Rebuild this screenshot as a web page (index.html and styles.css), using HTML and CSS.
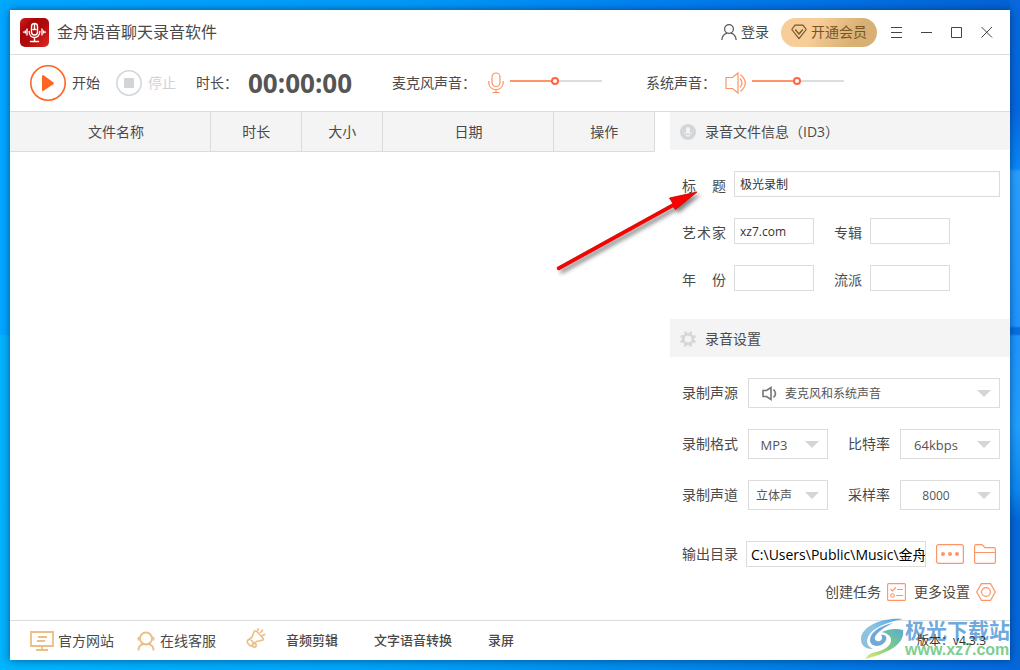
FILE: index.html
```html
<!DOCTYPE html>
<html lang="zh-CN">
<head>
<meta charset="utf-8">
<title>金舟语音聊天录音软件</title>
<link rel="stylesheet" href="styles.css">
</head>
<body>
<div class="window">
  <header class="titlebar">
    <svg class="logo" width="29" height="29" viewBox="0 0 29 29">
      <defs><linearGradient id="red" x1="0" y1="0" x2="1" y2="1"><stop offset="0" stop-color="#d81c1c"/><stop offset=".3" stop-color="#a60608"/><stop offset=".55" stop-color="#b00a0c"/><stop offset="1" stop-color="#e02a24"/></linearGradient></defs>
      <rect width="29" height="29" rx="5" fill="url(#red)"/>
      <g fill="none" stroke="#fff" stroke-width="1.4" stroke-linecap="round"><rect x="11.5" y="5.5" width="6" height="11.5" rx="3"/><path d="M14.5 6v5M13 11.5h3M9.2 13.5c0 8 10.6 8 10.6 0M14.5 19.5v4M10.5 23.5h8M7 11v6M5.3 13v2M3.8 14v.3M22 11v6M23.7 13v2M25.2 14v.3"/></g>
    </svg>
    <h1 class="app-name">金舟语音聊天录音软件</h1>
    <button class="plain login" type="button">
      <svg width="16" height="18" viewBox="0 0 16 18" fill="none" stroke="#555" stroke-width="1.2"><circle cx="8" cy="6" r="4.4"/><path d="M.8 17c.4-4 3-6.2 5.4-6.8M15.2 17c-.4-4-3-6.2-5.4-6.8"/></svg>
      登录
    </button>
    <button class="vip" type="button">
      <svg width="16" height="16" viewBox="0 0 16 16" fill="none" stroke="#7a5523" stroke-width="1.2" stroke-linejoin="round"><path d="M4 1.2h8l3.2 4.3L8 14.6.8 5.5zM4.2 5.5L8 10l3.8-4.5"/></svg>
      开通会员
    </button>
    <div class="win-buttons">
      <button class="plain" type="button" aria-label="菜单"><svg width="12" height="12" viewBox="0 0 12 12" stroke="#444"><path d="M0 1.5h11M0 6.5h11M0 11.5h11"/></svg></button>
      <button class="plain" type="button" aria-label="最小化"><svg width="12" height="12" viewBox="0 0 12 12" stroke="#444"><path d="M0 6.5h11"/></svg></button>
      <button class="plain" type="button" aria-label="最大化"><svg width="12" height="12" viewBox="0 0 12 12" stroke="#444" fill="none"><path d="M.5 1.5h10v10H.5z"/></svg></button>
      <button class="plain" type="button" aria-label="关闭"><svg width="12" height="12" viewBox="0 0 12 12" stroke="#444"><path d="M.5 1L11 11.5M11 1L.5 11.5"/></svg></button>
    </div>
  </header>

  <div class="toolbar">
    <button class="plain start" type="button">
      <svg width="36" height="36" viewBox="0 0 36 36"><circle cx="18" cy="18" r="17.2" fill="none" stroke="#ff6422" stroke-width="1.6"/><path d="M12 11.500v13.500q0 1.800 1.600.8l9.600-6.500q1.200-1 0-2L13.600 10.200Q12 9.300 12 11.500z" fill="#ff6422"/></svg>
      开始
    </button>
    <button class="plain stop" type="button" disabled>
      <svg width="26" height="26" viewBox="0 0 26 26"><circle cx="13" cy="13" r="12.2" fill="none" stroke="#d2d5d8" stroke-width="1.5"/><path d="M8 8h10v10H8z" fill="#d2d5d8"/></svg>
      停止
    </button>
    <span class="time-label">时长：</span>
    <output class="clock">00:00:00</output>
    <div class="volume mic">
      <label for="mic">麦克风声音：</label>
      <svg width="16" height="22" viewBox="0 0 16 22" fill="none" stroke="#ff9466" stroke-width="1.2"><rect x="4" y="1" width="8" height="13.5" rx="4"/><path d="M.8 9v2.500c1 8 13.400 8 14.400 0V9M8 17.500v3M4.500 20.500h7"/></svg>
      <input id="mic" type="range" min="0" max="100" value="49">
    </div>
    <div class="volume system">
      <label for="sys">系统声音：</label>
      <svg width="22" height="22" viewBox="0 0 22 22" fill="none" stroke="#ff9466" stroke-width="1.2"><path d="M1 5.500h6.500L13 1v20l-5.500-4.500H1zM15 6.500q4 4.500 0 9M15.500 2.500q9.500 8.500 0 17"/></svg>
      <input id="sys" type="range" min="0" max="100" value="49">
    </div>
  </div>

  <main class="content">
    <section class="files">
      <table>
        <colgroup><col class="c-name"><col class="c-length"><col class="c-size"><col class="c-date"><col class="c-action"></colgroup>
        <thead><tr><th class="name">文件名称</th><th>时长</th><th>大小</th><th>日期</th><th>操作</th></tr></thead>
      </table>
    </section>

    <aside class="panel">
      <h2 class="section-head">
        <svg width="16" height="16" viewBox="0 0 16 16"><circle cx="8" cy="8" r="8" fill="#d3d6d9"/><rect x="6" y="3" width="4" height="7" rx="2" fill="#f4f4f4"/><path d="M4.500 8c0 5 7 5 7 0M8 11.500V13" fill="none" stroke="#f4f4f4"/></svg>
        录音文件信息（ID3）
      </h2>
      <div class="rows info">
        <div class="row"><label class="spread" for="title">标 题</label><input class="field wide" id="title" type="text" value="极光录制"></div>
        <div class="row"><label class="spread" for="artist">艺术家</label><input class="field" id="artist" type="text" value="xz7.com"><label class="second" for="album">专辑</label><input class="field" id="album" type="text"></div>
        <div class="row"><label class="spread" for="year">年 份</label><input class="field" id="year" type="text"><label class="second" for="genre">流派</label><input class="field" id="genre" type="text"></div>
      </div>

      <h2 class="section-head">
        <svg width="16" height="16" viewBox="0 0 16 16"><g fill="none" stroke="#d3d6d9"><circle cx="8" cy="8" r="4.8" stroke-width="2.6"/><circle cx="8" cy="8" r="6.9" stroke-width="2.2" stroke-dasharray="2.7 2.719" stroke-dashoffset="-1.3"/></g></svg>
        录音设置
      </h2>
      <div class="rows settings">
        <div class="row"><label for="source">录制声源</label>
          <div class="pick source">
            <svg class="pick-icon" width="15" height="15" viewBox="0 0 15 15" fill="none" stroke="#777" stroke-width="1.6"><path d="M1 4.500h3.500L9 1.500v12l-4.500-3H1zM11.500 3.500q4 4 0 8"/></svg>
            <select id="source"><option>麦克风和系统声音</option></select>
          </div>
        </div>
        <div class="row"><label for="format">录制格式</label><div class="pick small"><select class="latin" id="format"><option>MP3</option></select></div><label class="second" for="bitrate">比特率</label><div class="pick medium"><select class="latin" id="bitrate"><option>64kbps</option></select></div></div>
        <div class="row"><label for="channel">录制声道</label><div class="pick small"><select id="channel"><option>立体声</option></select></div><label class="second" for="rate">采样率</label><div class="pick medium"><select id="rate"><option>8000</option></select></div></div>
      </div>

      <div class="output">
        <label for="path">输出目录</label>
        <input class="field path" id="path" type="text" value="C:\Users\Public\Music\金舟语音聊天录音软件">
        <button class="plain" type="button" aria-label="浏览"><svg width="28" height="20" viewBox="0 0 28 20"><rect x=".6" y=".6" width="26.8" height="18.8" rx="2" fill="none" stroke="#ff9466" stroke-width="1.2"/><g fill="#ff9466"><circle cx="7" cy="10" r="2"/><circle cx="14" cy="10" r="2"/><circle cx="21" cy="10" r="2"/></g></svg></button>
        <button class="plain" type="button" aria-label="打开目录"><svg width="22" height="20" viewBox="0 0 22 20" fill="none" stroke="#ff9466" stroke-width="1.2"><path d="M.6 18V2Q.6.600 2 .600h6l3 3h9q1.400 0 1.400 1.400v13q0 1.400-1.400 1.400H2Q.6 19.400.6 18zM.6 8.500h20.800"/></svg></button>
      </div>
      <div class="more">
        <button class="plain" type="button">创建任务
          <svg width="19" height="18" viewBox="0 0 19 18" fill="none" stroke="#ff9466" stroke-width="1.1"><rect x=".6" y=".6" width="17.8" height="16.8" rx="1"/><path d="M3.500 6l2 2L9 4.500M10 6.500h6M9 12.500h7"/><circle cx="5.5" cy="12.5" r="1.8"/></svg></button>
        <button class="plain" type="button">更多设置
          <svg width="20" height="18" viewBox="0 0 20 18" fill="none" stroke="#ff9466" stroke-width="1.2"><path d="M5.500.600h9L19.300 9l-4.800 8.400h-9L.7 9z"/><circle cx="10" cy="9" r="4.4"/></svg></button>
      </div>
    </aside>
  </main>

  <footer class="footer">
    <a class="site" href="#">
      <svg width="24" height="20" viewBox="0 0 24 20" fill="none" stroke="#ecbd84" stroke-width="1.8"><path d="M1 1h22v14H1zM8 6h9M7 10h8M12 15v4M6 19h12"/></svg>
      官方网站
    </a>
    <a class="service" href="#">
      <svg width="20" height="20" viewBox="0 0 20 20" fill="none" stroke="#ecbd84" stroke-width="1.8"><circle cx="10" cy="7.5" r="6"/><path d="M2.500 19.500c0-4 2.500-6 5-6.500M17.500 19.500c0-4-2.500-6-5-6.500M2.500 6v3.500M17.500 6v3.500"/></svg>
      在线客服
    </a>
    <svg class="horn" width="20" height="20" viewBox="0 0 20 20" fill="none" stroke="#ecbd84" stroke-width="1.6" stroke-linejoin="round" stroke-linecap="round"><path d="M6 9L8 3.800Q9 2 10.800 3.500L17 10Q18 12 16 12.300L10.500 13.500M6 9L1.500 12.500Q.8 14 2 15.500L4.200 18Q6 18 7 16.500L10.500 13.500M5 12l3.500 3.500M12 2.500V.9M14.500 4.500l2-2.300M16.500 7.500l2.300-1"/><circle cx="8.3" cy="17.2" r="1.9"/></svg>
    <nav class="tools"><a href="#">音频剪辑</a><a href="#">文字语音转换</a><a href="#">录屏</a></nav>
    <span class="version">版本：v4.3.3</span>
    <div class="brand">
      <svg width="44" height="42" viewBox="0 0 44 42">
        <defs><linearGradient id="swirl" x1="0" y1="1" x2="1" y2="0"><stop offset="0" stop-color="#8cc0dc"/><stop offset=".5" stop-color="#8cc4e4"/><stop offset="1" stop-color="#4aa4e4"/></linearGradient><linearGradient id="tail" x1="0" y1="1" x2="1" y2="0"><stop offset="0" stop-color="#e2ec70"/><stop offset=".5" stop-color="#80cc88"/><stop offset="1" stop-color="#58acd0"/></linearGradient></defs>
        <path d="M42 1C20-1 0 9 0 21c0 7 5 10 12 10-6-3-7-7-5-12C11 10 26 4 42 1z" fill="url(#swirl)"/>
        <path d="M32 5C18 8 9 15 9 22c0 7 10 8 15 2 3-4 1-8-4-7 2 2 1 5-1 6-3 1-6-1-5-4 2-5 10-10 18-14z" fill="#6fa9d8"/>
        <path d="M42 12c2 12-10 22-38 29 2-3 4-5 7-6 11-2 20-7 19-14-1-4-5-6-9-7 6-3 14-4 21-2z" fill="url(#tail)"/>
      </svg>
      <div class="brand-text"><span class="brand-name">极光下载站</span><span class="brand-url">www.xz7.com</span></div>
    </div>
  </footer>

  <svg class="pointer" width="160" height="100" viewBox="0 0 160 100">
    <path d="M9 87L8 84.500 124 20.500l-3.500-5.500L148 9l-21.500 17.500-3-3.500z" fill="#f00" stroke="#b00" stroke-width=".8"/>
    <path d="M10 86L126 22" stroke="#f00" stroke-width="2.4" stroke-linecap="round"/>
  </svg>
</div>
</body>
</html>
```
FILE: styles.css
```css
* { box-sizing: border-box; }
body {
  margin: 0;
  min-height: 100vh;
  padding: 10px;
  display: flex;
  font: 14px/20px "Open Sans", "Noto Sans CJK SC", sans-serif;
  color: #4a4a4a;
  background:
    linear-gradient(180deg, #0868dc 0, #0468e0 110px, #0888f8 168px, #27a0ff 172px, #1e96ff 326px, #0870e0 328px, #0870e0 334px, #1e96ff 336px, #1ea0ff 426px, #0c88f0 490px, #0468d8 520px, #0468dc 100%) right / 10px 100% no-repeat,
    linear-gradient(90deg, #00a8ff, #009af8 40%, #0080f0 65%, #0462d4) top / 100% 50% no-repeat,
    linear-gradient(90deg, #00b4fc, #00a4f8 35%, #0084e8 70%, #0468dc) bottom / 100% 50% no-repeat;
}
svg { display: block; flex: none; }
button, input, select { font: inherit; color: inherit; }
a { color: inherit; text-decoration: none; }
.plain {
  display: flex;
  align-items: center;
  padding: 0;
  border: 0;
  background: none;
}
.window {
  position: relative;
  flex: 1;
  display: flex;
  flex-direction: column;
  background: #fff;
  box-shadow: 0 0 8px rgba(0, 30, 80, .6);
}
.titlebar {
  display: flex;
  align-items: center;
  height: 45px;
  padding: 0 8px 0 10px;
  border-bottom: 1px solid #dcdcdc;
}
.app-name {
  flex: 1;
  margin: 0 0 0 8px;
  font-size: 16px;
  font-weight: 400;
}
.login { gap: 4px; margin-right: 12px; }
.vip {
  display: flex;
  align-items: center;
  gap: 4px;
  height: 29px;
  padding: 0 10px;
  border: 0;
  border-radius: 15px;
  color: #7a5523;
  background: linear-gradient(120deg, #f7cd99 35%, #d9b074 75%);
}
.win-buttons { display: flex; margin-left: 5px; }
.win-buttons .plain { width: 30px; height: 30px; justify-content: center; }

.toolbar {
  display: flex;
  align-items: center;
  height: 57px;
  padding-left: 20px;
  border-bottom: 1px solid #dcdcdc;
}
.start { gap: 6px; }
.stop { gap: 6px; margin-left: 16px; color: #cfd2d5; }
.time-label { margin-left: 20px; }
.clock {
  width: 104px;
  margin-left: 10px;
  font-size: 26px;
  line-height: 32px;
  font-weight: 700;
  color: #555;
}
.volume { display: flex; align-items: center; }
.volume label { white-space: nowrap; }
.volume svg { margin: 0 6px 0 12px; }
.volume.mic { margin-left: 40px; }
.volume.system { margin-left: 44px; }
.volume.system svg { margin: 0 5px 0 9px; }
.volume input {
  appearance: none;
  width: 92px;
  height: 10px;
  margin: 0 0 4px;
  background: linear-gradient(90deg, #ff9466 49%, #ddd 49%) center / 100% 2px no-repeat;
}
.volume input::-webkit-slider-thumb {
  appearance: none;
  width: 8px;
  height: 8px;
  border: 2px solid #ff6444;
  border-radius: 50%;
  background: #fff;
}

.content { flex: 1; display: flex; gap: 15px; }
.files { flex: 1; }
.files table { width: 100%; border-collapse: separate; border-spacing: 0; table-layout: fixed; }
.files th {
  height: 40px;
  padding: 0;
  font-weight: 400;
  background: #f4f4f4;
  border-right: 1px solid #dcdcdc;
  border-bottom: 1px solid #dcdcdc;
}
.files .name { padding-left: 12px; }
.c-name { width: 31.2%; }
.c-length { width: 14.1%; }
.c-size { width: 12.6%; }
.c-date { width: 26.5%; }
.c-action { width: 15.6%; }

.panel { width: 340px; }
.section-head {
  display: flex;
  align-items: center;
  gap: 9px;
  height: 38px;
  margin: 0;
  padding: 2px 0 0 10px;
  font-size: 14px;
  font-weight: 400;
  background: #f4f4f4;
}
.rows { display: flex; flex-direction: column; gap: 21px; padding: 21px 10px 28px 12px; }
.row { display: flex; align-items: center; }
.spread { width: 44px; margin: 4px 8px 0 0; text-align: justify; text-align-last: justify; }
.second { margin-left: 20px; }
.info .second { margin: 4px 8px 0 20px; }
.field {
  width: 80px;
  height: 26px;
  padding: 0 5px;
  border: 1px solid #dcdcdc;
  background: #fff;
  font-size: 12px;
  color: #333;
}
.wide { width: auto; flex: 1; min-width: 0; }
.settings { padding-bottom: 31px; }
.settings label { margin-right: 10px; white-space: nowrap; }
.pick { position: relative; display: flex; align-items: center; height: 30px; border: 1px solid #dcdcdc; }
.pick::after {
  content: "";
  position: absolute;
  right: 8px;
  border: 7px solid transparent;
  border-top-color: #d3d6d9;
  border-bottom: 0;
  pointer-events: none;
}
.pick select {
  appearance: none;
  width: 100%;
  height: 28px;
  padding: 2px 28px 0 0;
  border: 0;
  background: none;
  font-size: 12px;
  text-align: center;
  text-align-last: center;
  color: #555;
}
.pick .latin { font-size: 13px; }
.pick.source { flex: 1; }
.pick.source select { padding-left: 8px; text-align: left; text-align-last: left; }
.pick-icon { margin-left: 13px; }
.pick.small { width: 80px; }
.pick.medium { flex: 1; }

.output { display: flex; align-items: center; gap: 10px; padding: 0 14px 0 12px; }
.output label { margin-right: -2px; white-space: nowrap; }
.output .path { flex: 1; min-width: 0; padding: 0 0 0 4px; font-size: 14px; color: #000; }
.more { display: flex; justify-content: flex-end; gap: 8px; padding: 15px 14px 18px 12px; }
.more .plain { gap: 6px; }

.footer {
  position: relative;
  display: flex;
  align-items: center;
  height: 40px;
  padding: 0 24px 0 20px;
  border-top: 1px solid #dcdcdc;
}
.site, .service { display: flex; align-items: center; gap: 4px; }
.service { margin-left: 22px; }
.horn { margin: 0 20px 5px 30px; }
.tools { display: flex; gap: 36px; padding-bottom: 2px; font-size: 13px; font-weight: 500; }
.version { position: relative; z-index: 1; margin-left: auto; font-size: 12px; color: #333; }
.brand { position: absolute; right: 0; bottom: 0; display: flex; align-items: center; }
.brand-text { display: flex; flex-direction: column; }
.brand-name { font-size: 21px; line-height: 22px; font-weight: 700; color: #70aadd; }
.brand-url { font: 700 16px/18px "Liberation Sans", sans-serif; color: #7fcd91; }

.pointer {
  position: absolute;
  right: 301px;
  top: 173px;
  filter: drop-shadow(3px 3px 2px rgba(0, 0, 0, .5));
  pointer-events: none;
}
```
